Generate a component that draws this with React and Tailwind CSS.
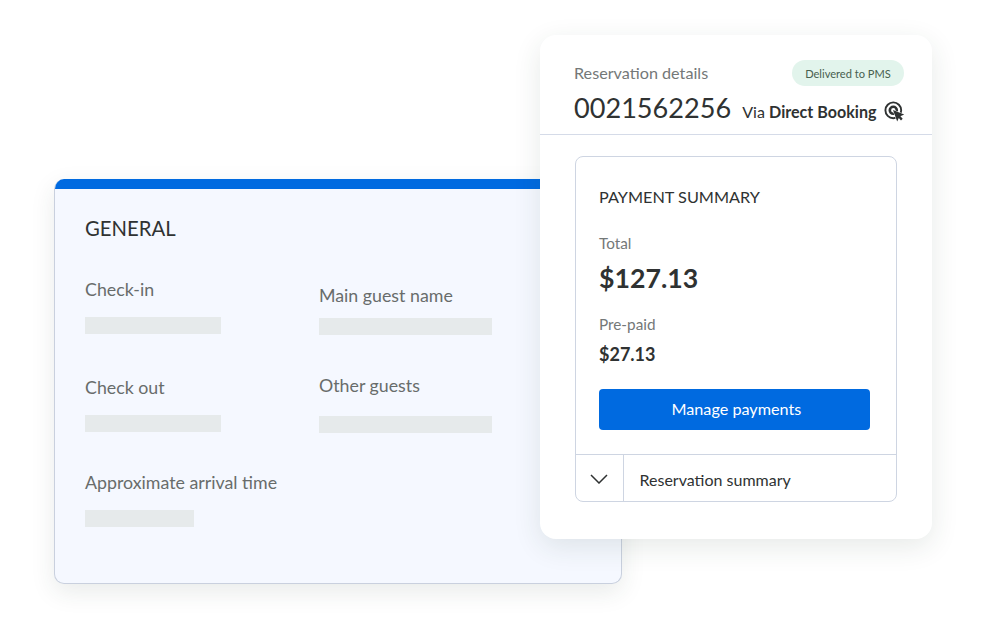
// ─── General card ────────────────────────────────────────────────────────────

function Field({ label, className, barClassName }) {
  return (
    <div className={className}>
      <div className="h-6 leading-6 text-[17.8px] text-[#686c6b] whitespace-nowrap">{label}</div>
      <div className={`h-[17px] bg-[#e6eaeb] ${barClassName}`} />
    </div>
  )
}

function GeneralCard() {
  return (
    <section className="w-[568px] h-[405px] mt-[179px] flex-shrink-0 flex flex-col rounded-[10px] border border-t-0 border-[#c9d0de] bg-[#f5f8ff] overflow-hidden shadow-[0_8px_24px_rgba(40,60,50,0.10)]">
      <div className="h-[10.4px] -mx-px flex-shrink-0 bg-[#006ae0]" />
      <div className="pl-[30px] pt-[26.6px]">
        <h2 className="h-6 leading-6 text-[20.3px] text-[#2f3232]">GENERAL</h2>
        <div className="flex pt-[37px]">
          <div className="w-[234px]">
            <Field label="Check-in" barClassName="mt-4 w-[136px]" />
            <Field label="Check out" className="mt-[41px]" barClassName="mt-4 w-[136px]" />
            <Field label="Approximate arrival time" className="mt-[38px]" barClassName="mt-4 w-[109px]" />
          </div>
          <div className="pt-1.5">
            <Field label="Main guest name" barClassName="mt-[11px] w-[173px]" />
            <Field label="Other guests" className="mt-[38px]" barClassName="mt-[19px] w-[173px]" />
          </div>
        </div>
      </div>
    </section>
  )
}

// ─── Reservation card ────────────────────────────────────────────────────────

function ClickTargetIcon() {
  return (
    <svg width="21" height="21" viewBox="0 0 21 21" fill="none" className="flex-shrink-0">
      <circle cx="9.3" cy="9.3" r="7.9" stroke="#2f3232" strokeWidth="1.9" />
      <circle cx="9.3" cy="9.3" r="3.5" stroke="#2f3232" strokeWidth="2.6" />
      <path d="M9 9 20.2 13.5 16.4 15.3 18.7 17.8 17 19.4 14.8 17 13.2 20.4Z" fill="#2f3232" stroke="#fff" strokeWidth="1" paintOrder="stroke" />
    </svg>
  )
}

function PaymentSummary() {
  return (
    <div className="mt-[21px] ml-[35px] w-[322px] h-[346px] flex flex-col rounded-[8px] border border-[#ced5e2]">
      <div className="flex-1 px-[23px] pt-[28px]">
        <h3 className="h-6 leading-6 text-[16.25px] text-[#2f3232]">PAYMENT SUMMARY</h3>
        <div className="mt-[24px] h-5 leading-5 text-[15.3px] text-[#747878]">Total</div>
        <div className="mt-[9px] h-8 leading-8 text-[26.7px] font-bold text-[#2f3232]">$127.13</div>
        <div className="mt-5 h-5 leading-5 text-[15.3px] text-[#747878]">Pre-paid</div>
        <div className="mt-[8px] h-6 leading-6 text-[18px] font-bold text-[#2f3232]">$27.13</div>
        <button className="mt-[23px] ml-[0.4px] block w-[271px] h-[41px] pb-px pl-[3px] rounded-[4px] bg-[#006ae0] text-[16.2px] text-white">
          Manage payments
        </button>
      </div>
      <div className="h-[47px] flex border-t border-[#ced5e2]">
        <div className="w-[48px] flex items-center justify-center border-r border-[#ced5e2]">
          <svg width="18" height="10" viewBox="0 0 18 10" fill="none" stroke="#2f3232" strokeWidth="1.5" className="mr-px mt-0.5">
            <path d="M1 1 9 9 17 1" />
          </svg>
        </div>
        <div className="pl-[15.5px] pt-[13px] h-6 leading-6 text-[16px] text-[#2f3232]">Reservation summary</div>
      </div>
    </div>
  )
}

function ReservationCard() {
  return (
    <section className="relative w-[392px] h-[504px] mt-[35px] -ml-[82px] flex-shrink-0 rounded-[16px] bg-white shadow-[0_8px_28px_rgba(40,60,50,0.11)]">
      <header className="h-[100px] pl-[34px] pr-7 border-b border-[#d5dbe8]">
        <div className="flex justify-between pt-[25px]">
          <span className="mt-px h-6 leading-6 text-[16.2px] text-[#747878]">Reservation details</span>
          <span className="w-[112px] h-[26px] leading-[27px] rounded-full bg-[#e2f4ec] text-center text-[11.1px] text-[#48604f]">
            Delivered to PMS
          </span>
        </div>
        <div className="flex items-start pt-[6px]">
          <span className="h-8 leading-8 text-[27.1px] text-[#2f3232]">0021562256</span>
          <span className="ml-[11px] mt-[8px] h-6 leading-6 text-[16.1px] text-[#2f3232] whitespace-nowrap">
            Via <b>Direct Booking</b>
          </span>
          <span className="ml-[7px] mt-[9px]"><ClickTargetIcon /></span>
        </div>
      </header>
      <PaymentSummary />
    </section>
  )
}

// ─── App ─────────────────────────────────────────────────────────────────────

export default function App() {
  return (
    <main className="w-[1006px] h-[629px] pl-[54px] flex items-start overflow-hidden bg-white font-[Lato,sans-serif]">
      <GeneralCard />
      <ReservationCard />
    </main>
  )
}
